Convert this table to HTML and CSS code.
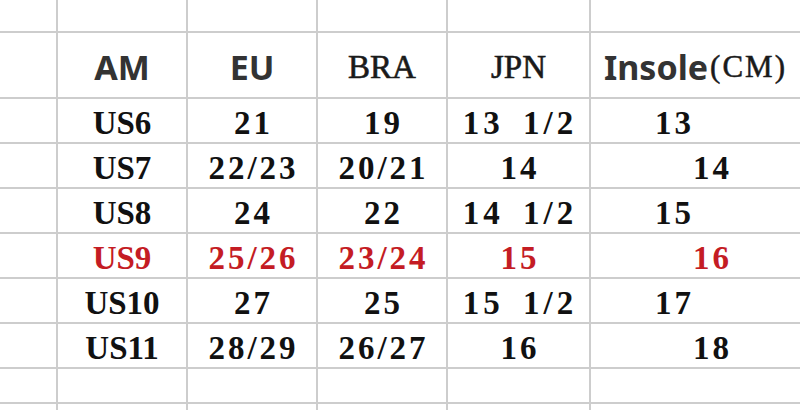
FILE: index.html
```html
<!DOCTYPE html>
<html lang="en">
<head>
<meta charset="utf-8">
<title>Size chart</title>
<link rel="stylesheet" href="styles.css">
</head>
<body>
<div class="sheet">
  <div class="c"></div><div class="c"></div><div class="c"></div><div class="c"></div><div class="c"></div><div class="c"></div>

  <div class="c"></div>
  <div class="c hd sans">AM</div>
  <div class="c hd sans">EU</div>
  <div class="c hd serif">BRA</div>
  <div class="c hd serif">JPN</div>
  <div class="c hd sans">Insole<span class="cm">(CM)</span></div>

  <div class="c"></div>
  <div class="c d">US6</div>
  <div class="c d num">21</div>
  <div class="c d num">19</div>
  <div class="c d num frac">13&nbsp;1/2</div>
  <div class="c d num ins-a">13</div>

  <div class="c"></div>
  <div class="c d">US7</div>
  <div class="c d num">22/23</div>
  <div class="c d num">20/21</div>
  <div class="c d num">14</div>
  <div class="c d num ins-b">14</div>

  <div class="c"></div>
  <div class="c d">US8</div>
  <div class="c d num">24</div>
  <div class="c d num">22</div>
  <div class="c d num frac">14&nbsp;1/2</div>
  <div class="c d num ins-a">15</div>

  <div class="c"></div>
  <div class="c d red">US9</div>
  <div class="c d num red">25/26</div>
  <div class="c d num red">23/24</div>
  <div class="c d num red">15</div>
  <div class="c d num red ins-b">16</div>

  <div class="c"></div>
  <div class="c d">US10</div>
  <div class="c d num">27</div>
  <div class="c d num">25</div>
  <div class="c d num frac">15&nbsp;1/2</div>
  <div class="c d num ins-a">17</div>

  <div class="c"></div>
  <div class="c d">US11</div>
  <div class="c d num">28/29</div>
  <div class="c d num">26/27</div>
  <div class="c d num">16</div>
  <div class="c d num ins-b">18</div>

  <div class="c"></div><div class="c"></div><div class="c"></div><div class="c"></div><div class="c"></div><div class="c"></div>
  <div class="c"></div><div class="c"></div><div class="c"></div><div class="c"></div><div class="c"></div><div class="c"></div>
</div>
</body>
</html>
```

FILE: styles.css
```css
html, body {
  margin: 0;
  padding: 0;
  background: #fff;
  overflow: hidden;
}

.sheet {
  width: 800px;
  height: 410px;
  display: grid;
  grid-template-columns: 56px 128px 128px 128px 141px 209px;
  grid-template-rows: 31px 64px 43px 43px 43px 43px 43px 43px 33px 6px;
  gap: 2px;
  background: #cdcdcd;
  overflow: hidden;
}

.c {
  background: #fff;
  display: flex;
  align-items: center;
  justify-content: center;
  white-space: nowrap;
  color: #111;
}

.hd {
  padding-top: 4px;
}

.sans {
  font-family: "Noto Sans", "Liberation Sans", sans-serif;
  font-weight: 700;
  font-size: 34px;
  color: #333;
}

.serif {
  font-family: "Liberation Serif", serif;
  font-weight: 400;
  font-size: 33px;
  color: #1a1a1a;
  -webkit-text-stroke: 0.6px #1a1a1a;
}

.cm {
  font-family: "Liberation Serif", serif;
  font-weight: 400;
  font-size: 31px;
  color: #1a1a1a;
  letter-spacing: 2px;
  -webkit-text-stroke: 0.5px #1a1a1a;
  margin-left: 2px;
}

.d {
  font-family: "Liberation Serif", serif;
  font-weight: 700;
  font-size: 33px;
  padding-top: 5px;
}

.num {
  letter-spacing: 3px;
  padding-left: 3px;
}

.frac {
  letter-spacing: 4px;
  word-spacing: 7px;
}

.red {
  color: #c41c24;
}

.ins-a {
  justify-content: flex-start;
  padding-left: 64px;
}

.ins-b {
  justify-content: flex-start;
  padding-left: 102px;
}
```
